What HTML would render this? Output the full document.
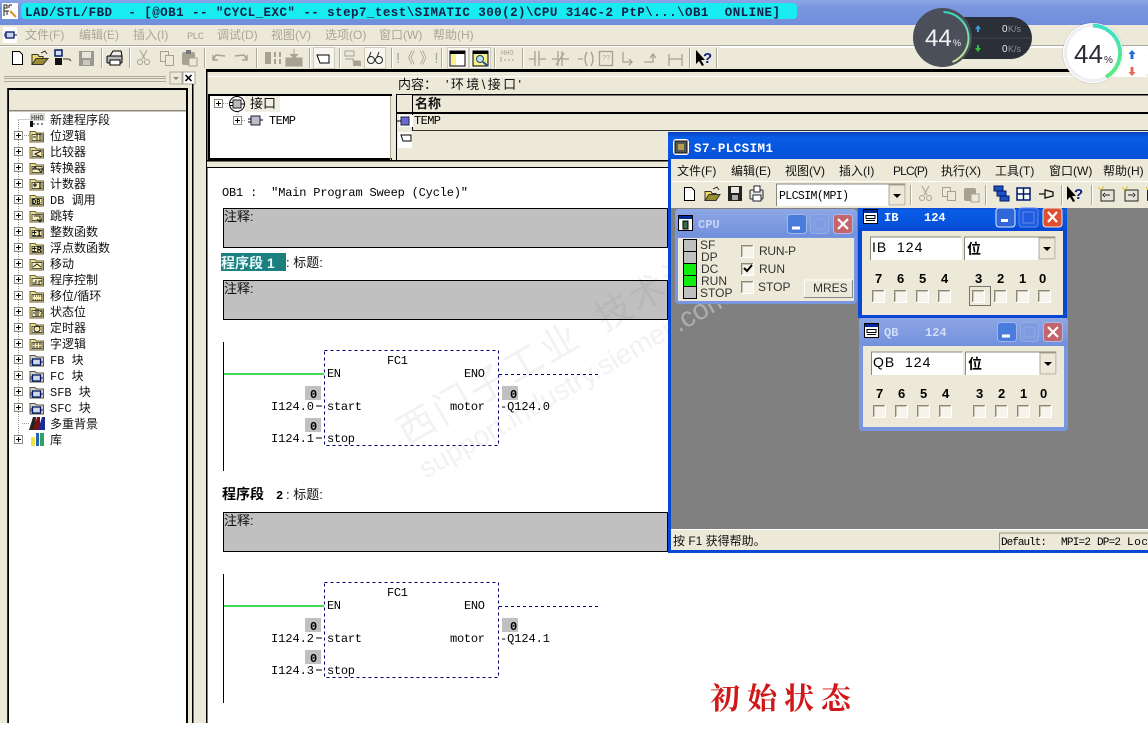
<!DOCTYPE html>
<html><head><meta charset="utf-8"><title>LAD/STL/FBD</title>
<style>
html,body{margin:0;padding:0;background:#fff}
svg{display:block}
text{white-space:pre;font-family:"Liberation Mono","Noto Sans CJK SC",monospace;font-size:12px;fill:#000}
.c{font-family:"Liberation Sans","Noto Sans CJK SC",sans-serif;font-size:12px;fill:#111}
.g{font-family:"Liberation Sans","Noto Sans CJK SC",sans-serif;font-size:12px;fill:#a9a696}
.s{font-family:"Liberation Sans",sans-serif;font-size:12px;fill:#333}
.d{font-family:"Liberation Sans",sans-serif;font-size:13px;font-weight:bold;fill:#000}
</style></head><body>
<svg width="1148" height="732" viewBox="0 0 1148 732" xmlns="http://www.w3.org/2000/svg">
<defs>
<linearGradient id="tb" x1="0" y1="0" x2="0" y2="1"><stop offset="0" stop-color="#8ba6e6"/><stop offset=".3" stop-color="#7a96df"/><stop offset="1" stop-color="#6f8ddb"/></linearGradient>
<linearGradient id="ta" x1="0" y1="0" x2="0" y2="1"><stop offset="0" stop-color="#0a3fc0"/><stop offset=".2" stop-color="#0a5ce6"/><stop offset="1" stop-color="#0450d8"/></linearGradient>
<linearGradient id="ti" x1="0" y1="0" x2="0" y2="1"><stop offset="0" stop-color="#8ea6e4"/><stop offset="1" stop-color="#7290dc"/></linearGradient>
<linearGradient id="arc1" x1="0" y1="0" x2="0" y2="1"><stop offset="0" stop-color="#37d6bd"/><stop offset="1" stop-color="#cfe88f"/></linearGradient>
<linearGradient id="arc2" x1="0" y1="0" x2="0" y2="1"><stop offset="0" stop-color="#3fe0c8"/><stop offset="1" stop-color="#5fe87f"/></linearGradient>
<g id="fold"><path d="M1 3.500h5l1.500 1.500h7v9h-13.500z" fill="#efe08a" stroke="#6b6338"/><rect x="3" y="6.500" width="10" height="6" fill="#f7eeb0" stroke="#555"/></g>
<g id="blk"><path d="M1 3.500h5l1.500 1.500h7v9h-13.500z" fill="#d6d6c8" stroke="#555"/><rect x="3.500" y="7" width="8" height="6" fill="#cfd6ee" stroke="#001a66" stroke-width="1.300"/><path d="M1.500 9h2M1.500 11h2M11.500 10h2.500" stroke="#001a66"/></g>
<g id="plus"><rect x=".5" y=".5" width="8" height="8" fill="#fff" stroke="#8a8a80"/><path d="M2 4.500h5M4.500 2v5" stroke="#000"/></g>
<g id="cb"><rect x="0" y="0" width="12" height="12" fill="#f6f4ec"/><path d="M.5 12V.5H12" stroke="#8a8878" fill="none"/><path d="M1.500 11V1.500H11" stroke="#c8c5b5" fill="none"/><path d="M0 12.500h12.500V0" stroke="#fff" fill="none"/></g>
<g id="sep"><path d="M.5 0v20" stroke="#aca899"/><path d="M1.500 0v20" stroke="#fff"/></g>
<g id="ctl" fill="none"><rect x=".5" y=".5" width="19" height="19" rx="3" fill="#4a7cdc" stroke="#9cb8ee"/><rect x="5" y="12.500" width="8" height="3" fill="#fff"/></g>
<g id="mx" fill="none"><rect x=".5" y=".5" width="18" height="19" rx="3" fill="#7f9ce2" stroke="#93ace8"/><rect x="4" y="5" width="11" height="10" stroke="#8ea8e8"/></g>
<g id="cl" fill="none"><rect x=".5" y=".5" width="19" height="19" rx="3" fill="#c4656e" stroke="#b0b8e4"/><path d="M5 5l10 10M15 5l-10 10" stroke="#fff" stroke-width="2.200"/></g>
<g id="tw"><rect x=".5" y=".5" width="14" height="14" fill="#fff" stroke="#000"/><rect x="1" y="1" width="13" height="3" fill="#002a9a"/><path d="M3 6.500h9v3h-9zM3 11.500h9" fill="#fff" stroke="#000"/></g>
</defs>

<rect width="1148" height="732" fill="#fff"/>
<!-- app background -->
<rect x="0" y="0" width="1148" height="723" fill="#ece9d8"/>
<rect x="0" y="723" width="1148" height="9" fill="#fff"/>
<!-- title -->
<rect x="0" y="0" width="1148" height="25" fill="url(#tb)"/>
<rect x="21" y="3" width="776" height="16" rx="4" fill="#18ecf0"/>
<g transform="translate(2,3)"><rect width="16" height="16" fill="#fff"/><path d="M2 2h3v3h-3zM2 5v8M7 2h3M7 2v3M2 8h5M5 8v4" stroke="#222" fill="none"/><path d="M8 8l6 6" stroke="#d89020" stroke-width="2"/></g>
<text x="25" y="16" textLength="755" style="font-weight:bold;font-size:12.500px;fill:#10204a">LAD/STL/FBD  - [@OB1 -- "CYCL_EXC" -- step7_test\SIMATIC 300(2)\CPU 314C-2 PtP\...\OB1  ONLINE]</text>

<!-- menu -->
<rect x="0" y="45" width="1148" height="1" fill="#aca899"/>
<rect x="0" y="46" width="1148" height="1" fill="#fff"/>
<g transform="translate(3,27)"><rect width="14" height="16" fill="#fff"/><rect x="3" y="5" width="8" height="6" fill="#ccd0e8" stroke="#001a66" stroke-width="1.300"/><path d="M1 7h2M1 9h2M11 8h3" stroke="#001a66"/></g>
<text class="g" x="25" y="39">文件(F)</text><text class="g" x="79" y="39">编辑(E)</text><text class="g" x="133" y="39">插入(I)</text><text x="187" y="39" textLength="17" style="font-size:10.500px;fill:#a9a696">PLC</text><text class="g" x="217" y="39">调试(D)</text><text class="g" x="271" y="39">视图(V)</text><text class="g" x="325" y="39">选项(O)</text><text class="g" x="379" y="39">窗口(W)</text><text class="g" x="433" y="39">帮助(H)</text>

<!-- main toolbar -->
<path d="M12.500 51.500h7l3 3v10h-10z" fill="#fff" stroke="#000"/>
<path d="M32 64.500v-10h6l1 2h4v8z" fill="#f0d868" stroke="#333"/><path d="M32 64.500l4-6h12l-5 6z" fill="#9a8c30" stroke="#333"/><path d="M41 53l4-2 2 3" fill="none" stroke="#333"/>
<rect x="55" y="50" width="7" height="6" fill="#d8dcf0" stroke="#001a66" stroke-width="1.500"/><rect x="55" y="58" width="7" height="7" fill="#111"/><path d="M63 59h6l2 2" stroke="#333" fill="none"/>
<rect x="79" y="51" width="15" height="15" fill="#9a9a90"/><rect x="82" y="52" width="9" height="6" fill="#e4e4dc"/><rect x="83" y="60" width="7" height="5" fill="#c8c8c0"/>
<use href="#sep" x="101" y="48"/>
<path d="M110 56l3-5h8l1 5z" fill="#eee" stroke="#000"/><rect x="107" y="56" width="15" height="7" rx="1" fill="#bbb" stroke="#000"/><rect x="110" y="60" width="10" height="5" fill="#fff" stroke="#000"/>
<use href="#sep" x="129" y="48"/>
<g fill="none" stroke="#a5a294"><path d="M140 50l5 9M147 50l-5 9"/><circle cx="140" cy="62" r="2.500"/><circle cx="147" cy="62" r="2.500"/><rect x="160.500" y="51.500" width="8" height="10" fill="#ece9d8"/><rect x="165.500" y="55.500" width="8" height="10" fill="#ece9d8"/></g>
<rect x="182" y="52" width="13" height="13" rx="2" fill="#a5a294"/><rect x="186" y="50" width="5" height="4" fill="#777"/><rect x="189" y="58" width="8" height="8" fill="#ece9d8" stroke="#a5a294"/>
<use href="#sep" x="204" y="48"/>
<path d="M213 60l3-5 9 1M213 55l0 5 5 0M247 60l-3-5-9 1M247 55l0 5-5 0" fill="none" stroke="#a5a294" stroke-width="1.500"/>
<use href="#sep" x="256" y="48"/>
<path d="M265 52h6v12h-6zM274 52h2v5h-2zM279 52h2v5h-2zM274 59h2v5h-2zM279 59h2v5h-2z" fill="#a5a294"/>
<path d="M286 58h16v8h-16zM294 49v7M290 54l4 4 4-4" fill="#a5a294" stroke="#a5a294"/>
<use href="#sep" x="309" y="48"/>
<rect x="313.500" y="47.500" width="21" height="21" fill="#f6f5ee" stroke="#cfccbc"/>
<path d="M317 55h12v8h-9z" fill="#fff" stroke="#000"/>
<use href="#sep" x="339" y="48"/>
<rect x="345" y="51" width="9" height="5" fill="none" stroke="#a5a294"/><path d="M345 59h8v2h7" stroke="#a5a294" fill="none"/><rect x="353" y="61" width="8" height="5" fill="#a5a294"/>
<rect x="364.500" y="47.500" width="21" height="21" fill="#f6f5ee" stroke="#cfccbc"/>
<g fill="none" stroke="#222"><circle cx="371" cy="60" r="3.500"/><circle cx="379" cy="60" r="3.500"/><path d="M369 57l2-5M377 57l2-5"/></g>
<use href="#sep" x="391" y="48"/>
<text class="c" x="396" y="63" style="fill:#a9a696;font-size:15px">!《 》!</text>
<use href="#sep" x="441" y="48"/>
<rect x="447.500" y="47.500" width="21" height="21" fill="#f6f5ee" stroke="#cfccbc"/>
<rect x="450" y="51" width="15" height="15" fill="#fff" stroke="#000"/><rect x="450" y="51" width="15" height="3" fill="#000"/><rect x="451" y="54" width="5" height="11" fill="#f8f088"/>
<rect x="469.500" y="47.500" width="21" height="21" fill="#f6f5ee" stroke="#cfccbc"/>
<rect x="473" y="51" width="15" height="15" fill="#f8f088" stroke="#000"/><rect x="473" y="51" width="15" height="3" fill="#000"/><circle cx="480" cy="59" r="3.500" fill="#bde" stroke="#246"/><path d="M483 62l5 4" stroke="#1a4fa8" stroke-width="2"/>
<use href="#sep" x="494" y="48"/>
<text x="501" y="55" style="font-size:7px;fill:#a9a696">HHO</text><path d="M501 57v5M504 60h2M508 60h2M512 60h2" stroke="#a5a294" fill="none"/>
<use href="#sep" x="522" y="48"/>
<g fill="none" stroke="#a5a294" stroke-width="1.300"><path d="M529 59h6M535 51v15M539 51v15M539 59h7M552 59h6M558 51v15M562 51v15M562 59h7M556 65l8-12M578 59h5"/><path d="M587 52q-4 7 0 14M591 52q4 7 0 14"/><rect x="599.500" y="51.500" width="13" height="14"/><path d="M623 52v10h9M629 59l3 3-3 3M644 62h9v-7M650 58l3-4 3 4M669 54v12M669 59h13M682 54v12"/></g>
<text x="602" y="60" style="font-size:7px;fill:#a9a696">??</text>
<use href="#sep" x="689" y="48"/>
<path d="M696 50v14l3-3 3 5 2-1-3-5h4z" fill="#000"/><text x="703" y="63" style="font-weight:bold;font-size:15px;fill:#0a1f88;font-family:'Liberation Sans'">?</text>
<use href="#sep" x="716" y="48"/>
<rect x="206" y="69" width="942" height="3" fill="#000"/>
<rect x="720" y="47" width="428" height="1" fill="#fff"/>

<!-- left panel -->
<path d="M4 76.500h162M4 78.500h162M4 81.500h162" stroke="#aca899" fill="none"/>
<rect x="170" y="72" width="12" height="12" fill="#ece9d8" stroke="#aca899"/><path d="M173 77h6l-3 3z" fill="#888"/>
<rect x="183" y="72" width="12" height="12" fill="#fff" stroke="#aca899"/><path d="M185.500 75l6 6M191.500 75l-6 6" stroke="#000" stroke-width="1.500"/>
<rect x="7" y="88" width="181" height="635" fill="#000"/>
<rect x="9" y="90" width="177" height="633" fill="#fff"/>
<rect x="9" y="90" width="177" height="20" fill="#ece9d8"/>
<rect x="9" y="110" width="177" height="1.500" fill="#8a8878"/>
<rect x="188" y="88" width="4" height="635" fill="#ece9d8"/>
<rect x="192" y="84" width="1.500" height="639" fill="#000"/>
<rect x="206" y="72" width="1.500" height="651" fill="#000"/>
<rect x="7" y="88" width="1" height="635" fill="#333"/>

<path d="M18.500 120v320M18.500 119.500h12M22 135.500h8M22 423.500h8" stroke="#999" stroke-dasharray="1 1" fill="none"/>
<g transform="translate(30,113)"><rect x="0" y="0" width="15" height="8" fill="#d8d8d0"/><text x="1" y="7" style="font-size:7px;fill:#333">HHO</text><rect x="0" y="8" width="3" height="6" fill="#111"/><path d="M3 11h12" stroke="#111" stroke-dasharray="2 2"/></g>
<text class="c" x="50" y="124">新建程序段</text>
<use href="#plus" x="14" y="131"/><use href="#fold" x="29" y="128"/><path d="M33 137h3M37 133v7M40 133v7" stroke="#222" fill="none"/><text class="c" x="50" y="140">位逻辑</text>
<use href="#plus" x="14" y="147"/><use href="#fold" x="29" y="144"/><path d="M41 151l-6 3 6 3" stroke="#222" fill="none"/><text class="c" x="50" y="156">比较器</text>
<use href="#plus" x="14" y="163"/><use href="#fold" x="29" y="160"/><path d="M33 169l2-2 2 2zM38 169h5l-2 3z" stroke="#222" fill="none"/><text class="c" x="50" y="172">转换器</text>
<use href="#plus" x="14" y="179"/><use href="#fold" x="29" y="176"/><path d="M33 185h4M35 183v4M40 182v7" stroke="#222" fill="none" stroke-width="1.300"/><text class="c" x="50" y="188">计数器</text>
<use href="#plus" x="14" y="195"/><use href="#fold" x="29" y="192"/><text x="32" y="204" style="font-size:7px;font-weight:bold">DB</text><text x="50" y="204" class="c" style="font-family:'Liberation Mono','Noto Sans CJK SC'">DB 调用</text>
<use href="#plus" x="14" y="211"/><use href="#fold" x="29" y="208"/><path d="M34 216h6v5M37 219l3 3 2-3" stroke="#222" fill="none"/><text class="c" x="50" y="220">跳转</text>
<use href="#plus" x="14" y="227"/><use href="#fold" x="29" y="224"/><text x="32" y="236" style="font-size:8px;font-weight:bold">±I</text><text class="c" x="50" y="236">整数函数</text>
<use href="#plus" x="14" y="243"/><use href="#fold" x="29" y="240"/><text x="32" y="252" style="font-size:8px;font-weight:bold">±R</text><text class="c" x="50" y="252">浮点数函数</text>
<use href="#plus" x="14" y="259"/><use href="#fold" x="29" y="256"/><path d="M33 267l4-3 4 3" stroke="#222" fill="none"/><text class="c" x="50" y="268">移动</text>
<use href="#plus" x="14" y="275"/><use href="#fold" x="29" y="272"/><path d="M33 283h3v-3M39 285v-4h3" stroke="#222" fill="none"/><text class="c" x="50" y="284">程序控制</text>
<use href="#plus" x="14" y="291"/><use href="#fold" x="29" y="288"/><path d="M33 296h9M33 300h9" stroke="#222" stroke-dasharray="1 1" fill="none"/><text class="c" x="50" y="300">移位/循环</text>
<use href="#plus" x="14" y="307"/><use href="#fold" x="29" y="304"/><path d="M33 313h2M36 309v7M38 309v7" stroke="#222" fill="none"/><text x="39" y="316" style="font-size:7px">?</text><text class="c" x="50" y="316">状态位</text>
<use href="#plus" x="14" y="323"/><use href="#fold" x="29" y="320"/><circle cx="37" cy="329" r="3" fill="none" stroke="#222"/><text class="c" x="50" y="332">定时器</text>
<use href="#plus" x="14" y="339"/><use href="#fold" x="29" y="336"/><path d="M33 344h9M33 347h9" stroke="#222" stroke-dasharray="2 1" fill="none"/><text class="c" x="50" y="348">字逻辑</text>
<use href="#plus" x="14" y="355"/><use href="#blk" x="29" y="352"/><text x="50" y="364" class="c" style="font-family:'Liberation Mono','Noto Sans CJK SC'">FB 块</text>
<use href="#plus" x="14" y="371"/><use href="#blk" x="29" y="368"/><text x="50" y="380" class="c" style="font-family:'Liberation Mono','Noto Sans CJK SC'">FC 块</text>
<use href="#plus" x="14" y="387"/><use href="#blk" x="29" y="384"/><text x="50" y="396" class="c" style="font-family:'Liberation Mono','Noto Sans CJK SC'">SFB 块</text>
<use href="#plus" x="14" y="403"/><use href="#blk" x="29" y="400"/><text x="50" y="412" class="c" style="font-family:'Liberation Mono','Noto Sans CJK SC'">SFC 块</text>
<path d="M29 430l4-13h3l-1 13z" fill="#222"/><path d="M33 430l4-13h3v13z" fill="#7a1010"/><path d="M38 430l4-13h3v13z" fill="#1a2a90"/><text class="c" x="50" y="428">多重背景</text>
<use href="#plus" x="14" y="435"/><path d="M31 437h4v9h-4z" fill="#e8e840"/><path d="M36 433h3v13h-3z" fill="#2860c0"/><path d="M40 433h4v13h-4z" fill="#30a060"/><text class="c" x="50" y="444">库</text>

<!-- interface pane -->
<rect x="207.500" y="72" width="940.500" height="88" fill="#ece9d8"/>
<rect x="208" y="76" width="940" height="1" fill="#fff"/>
<rect x="208" y="94" width="184" height="2" fill="#000"/>
<rect x="210" y="96" width="180" height="63" fill="#fff"/>
<rect x="208" y="96" width="2" height="64" fill="#000"/>
<rect x="208" y="158" width="184" height="2" fill="#000"/>
<rect x="390" y="96" width="1" height="64" fill="#aca899"/>
<rect x="396" y="94" width="1.500" height="66" fill="#000"/>
<rect x="397" y="94" width="751" height="1.500" fill="#000"/>
<rect x="397" y="95" width="15" height="65" fill="#ece9d8"/>
<rect x="396" y="112" width="752" height="2" fill="#000"/>
<rect x="412" y="95" width="1" height="35" fill="#000"/>
<rect x="413" y="114" width="735" height="16" fill="#ece9d8"/>
<rect x="412" y="130" width="736" height="1" fill="#333"/>
<rect x="207" y="160" width="941" height="1.500" fill="#000"/>
<text class="c" x="398" y="89" style="font-size:13px">内容：</text><text class="c" x="446" y="89" textLength="75" style="font-size:13px">'环境\接口'</text>
<text class="c" x="415" y="108" style="font-weight:bold;font-size:13px">名称</text>
<text x="414" y="124" textLength="27">TEMP</text>
<rect x="399" y="115" width="14" height="12" fill="#fff"/><rect x="401" y="117" width="8" height="8" fill="#6a6ad0" stroke="#223"/><path d="M397 121h4" stroke="#000"/>
<rect x="398" y="132" width="14" height="16" fill="#fff"/><path d="M401 135h10v6h-8z" fill="#fff" stroke="#000"/>
<!-- tree in pane -->
<use href="#plus" x="214" y="99"/>
<path d="M223 103.500h7M238 110v10M238 120.500h7" stroke="#999" stroke-dasharray="1 1" fill="none"/>
<rect x="245" y="96" width="35" height="16" fill="#f0eee2"/>
<circle cx="237" cy="104" r="7.500" fill="#fff" stroke="#000"/><rect x="233" y="100" width="8" height="8" fill="#bbb" stroke="#222"/><path d="M230 102.500h3M230 105.500h3M241 104h3" stroke="#000"/>
<text class="c" x="250" y="108" style="font-size:13px">接口</text>
<use href="#plus" x="233" y="116"/>
<rect x="251" y="116" width="9" height="9" fill="#bbc" stroke="#223"/><path d="M248 119h3M248 122h3M260 120h3" stroke="#000"/>
<text x="269" y="124" textLength="27">TEMP</text>

<!-- editor -->
<rect x="207" y="161.500" width="941" height="6" fill="#ece9d8"/>
<rect x="207.500" y="167" width="940.500" height="556" fill="#fff"/>
<rect x="207" y="167" width="941" height="1" fill="#000"/>

<text x="222" y="196" textLength="246">OB1 :  "Main Program Sweep (Cycle)"</text>
<rect x="223.500" y="208.500" width="444" height="39" fill="#c0c0c0" stroke="#000"/>
<text class="c" x="224" y="221" style="font-size:13px">注释:</text>
<rect x="221" y="253" width="65" height="18" fill="#1c8080"/>
<text class="c" x="221" y="268" style="fill:#e8fafa;font-weight:bold;font-size:14px">程序段 1</text>
<text class="c" x="286" y="267" style="font-size:13px">: 标题:</text>
<rect x="223.500" y="280.500" width="444" height="39" fill="#c0c0c0" stroke="#000"/>
<text class="c" x="224" y="293" style="font-size:13px">注释:</text>

<!-- network 1 -->
<path d="M223.500 342v129" stroke="#000"/>
<rect x="224" y="373" width="100" height="2" fill="#44d85a"/>
<rect x="324.500" y="350.500" width="174" height="95" fill="none" stroke="#000070" stroke-dasharray="3 3"/>
<path d="M499 374.500h100" stroke="#000070" stroke-dasharray="3 3"/>
<text x="387" y="364" textLength="21">FC1</text>
<text x="327" y="377" textLength="14">EN</text>
<text x="464" y="377" textLength="21">ENO</text>
<rect x="305" y="386" width="16" height="14" fill="#c0c0c0"/><text x="310" y="398" style="font-weight:bold">0</text>
<rect x="502" y="386" width="16" height="14" fill="#c0c0c0"/><text x="510" y="398" style="font-weight:bold">0</text>
<text x="271" y="410" textLength="43">I124.0</text><path d="M316 406h6" stroke="#000"/>
<text x="327" y="410" textLength="35">start</text>
<text x="450" y="410" textLength="35">motor</text>
<text x="500" y="410" textLength="50">-Q124.0</text>
<rect x="305" y="418" width="16" height="14" fill="#c0c0c0"/><text x="310" y="430" style="font-weight:bold">0</text>
<text x="271" y="442" textLength="43">I124.1</text><path d="M316 438h6" stroke="#000"/>
<text x="327" y="442" textLength="28">stop</text>

<text class="c" x="222" y="499" style="font-weight:bold;font-size:14px;fill:#000">程序段</text><text x="276" y="499" style="font-weight:bold">2</text><text class="c" x="286" y="499" style="font-size:13px">: 标题:</text>
<rect x="223.500" y="512.500" width="444" height="39" fill="#c0c0c0" stroke="#000"/>
<text class="c" x="224" y="525" style="font-size:13px">注释:</text>

<!-- network 2 -->
<path d="M223.500 574v129" stroke="#000"/>
<rect x="224" y="605" width="100" height="2" fill="#44d85a"/>
<rect x="324.500" y="582.500" width="174" height="95" fill="none" stroke="#000070" stroke-dasharray="3 3"/>
<path d="M499 606.500h100" stroke="#000070" stroke-dasharray="3 3"/>
<text x="387" y="596" textLength="21">FC1</text>
<text x="327" y="609" textLength="14">EN</text>
<text x="464" y="609" textLength="21">ENO</text>
<rect x="305" y="618" width="16" height="14" fill="#c0c0c0"/><text x="310" y="630" style="font-weight:bold">0</text>
<rect x="502" y="618" width="16" height="14" fill="#c0c0c0"/><text x="510" y="630" style="font-weight:bold">0</text>
<text x="271" y="642" textLength="43">I124.2</text><path d="M316 638h6" stroke="#000"/>
<text x="327" y="642" textLength="35">start</text>
<text x="450" y="642" textLength="35">motor</text>
<text x="500" y="642" textLength="50">-Q124.1</text>
<rect x="305" y="650" width="16" height="14" fill="#c0c0c0"/><text x="310" y="662" style="font-weight:bold">0</text>
<text x="271" y="674" textLength="43">I124.3</text><path d="M316 670h6" stroke="#000"/>
<text x="327" y="674" textLength="28">stop</text>

<!-- watermark on editor -->
<g opacity=".06" transform="rotate(-30 400 450)">
<text x="408" y="450" style="font-family:'Noto Sans CJK SC';font-size:38px;fill:#333;letter-spacing:3px">西门子工业</text>
<text x="636" y="450" style="font-family:'Noto Sans CJK SC';font-size:36px;fill:#333;letter-spacing:3px">技术论坛</text>
<text x="408" y="488" style="font-family:'Liberation Sans';font-size:28px;fill:#333">support.industry.siemens.com</text>
</g>

<text x="710" y="709" style="font-family:'Noto Serif CJK SC',serif;font-size:30px;fill:#d01818;letter-spacing:7px;font-weight:700">初始状态</text>

<!-- PLCSIM window -->
<rect x="668" y="132" width="480" height="421" fill="#0648d4"/>
<rect x="668" y="132" width="480" height="27" fill="url(#ta)"/>
<rect x="671" y="159" width="477" height="391" fill="#ece9d8"/>
<rect x="671" y="206" width="477" height="323" fill="#808080"/>
<rect x="671" y="529" width="477" height="1" fill="#fff"/>
<g transform="translate(673,139)"><rect width="16" height="16" rx="3" fill="#fff"/><rect x="2" y="2" width="12" height="12" fill="#555" stroke="#111"/><rect x="5" y="5" width="6" height="6" fill="#b0a050"/></g>
<text x="694" y="152" textLength="79" style="font-weight:bold;font-size:12.500px;fill:#fff">S7-PLCSIM1</text>
<text class="c" x="677" y="175">文件(F)</text><text class="c" x="731" y="175">编辑(E)</text><text class="c" x="785" y="175">视图(V)</text><text class="c" x="839" y="175">插入(I)</text><text class="c" x="893" y="175" textLength="35">PLC(P)</text><text class="c" x="941" y="175">执行(X)</text><text class="c" x="995" y="175">工具(T)</text><text class="c" x="1049" y="175">窗口(W)</text><text class="c" x="1103" y="175">帮助(H)</text>
<rect x="671" y="181" width="477" height="1" fill="#fff"/>
<path d="M684.500 187.500h7l3 3v10h-10z" fill="#fff" stroke="#000"/>
<path d="M705 200.500v-9h6l1 2h4v7z" fill="#f0d868" stroke="#333"/><path d="M705 200.500l4-6h11l-4 6z" fill="#9a8c30" stroke="#333"/><path d="M713 189l4-2 2 3" fill="none" stroke="#333"/>
<rect x="728" y="186" width="14" height="15" fill="#222"/><rect x="731" y="187" width="8" height="6" fill="#e8e8e0"/><rect x="732" y="195" width="6" height="5" fill="#aaa"/>
<rect x="750" y="190" width="13" height="9" rx="1" fill="#e8e8e0" stroke="#223"/><rect x="754" y="186" width="6" height="6" fill="#fff" stroke="#223"/><rect x="753" y="195" width="8" height="6" fill="#fff" stroke="#223"/>
<rect x="776" y="184" width="130" height="22" fill="#fff"/>
<path d="M776.500 206v-22h129" stroke="#8a8878" fill="none"/>
<text x="779" y="199" textLength="70" style="font-size:11.500px">PLCSIM(MPI)</text>
<rect x="889" y="185" width="16" height="20" fill="#ece9d8" stroke="#aca899"/><path d="M893 194h8l-4 4z" fill="#000"/>
<use href="#sep" x="910" y="185"/>
<g fill="none" stroke="#a5a294"><path d="M922 186l5 9M929 186l-5 9"/><circle cx="922" cy="198" r="2.500"/><circle cx="929" cy="198" r="2.500"/><rect x="942.500" y="187.500" width="8" height="9" fill="#ece9d8"/><rect x="947.500" y="191.500" width="8" height="9" fill="#ece9d8"/></g>
<rect x="964" y="188" width="12" height="13" rx="2" fill="#a5a294"/><rect x="971" y="194" width="8" height="8" fill="#ece9d8" stroke="#a5a294"/>
<use href="#sep" x="985" y="185"/>
<rect x="994" y="186" width="9" height="5" fill="#2050c0" stroke="#001a66"/><rect x="997" y="191" width="9" height="5" fill="#2050c0" stroke="#001a66"/><rect x="1000" y="196" width="9" height="5" fill="#2050c0" stroke="#001a66"/>
<rect x="1017" y="188" width="13" height="12" fill="#fff" stroke="#001a66" stroke-width="1.500"/><path d="M1017 194h13M1023.500 188v12" stroke="#001a66" stroke-width="1.500"/>
<path d="M1039 194h6M1045 190v8l8-2v-4z" fill="none" stroke="#111" stroke-width="1.300"/>
<use href="#sep" x="1061" y="185"/>
<path d="M1067 186v14l3-3 3 5 2-1-3-5h4z" fill="#000"/><text x="1074" y="199" style="font-weight:bold;font-size:15px;fill:#0a1f88;font-family:'Liberation Sans'">?</text>
<use href="#sep" x="1091" y="185"/>
<rect x="1101" y="190" width="13" height="11" fill="#e4e4da" stroke="#222"/><path d="M1098 187l3 3M1104 186l-2 3" stroke="#d8c820"/><path d="M1105 195h5M1105 193l-2 2 2 2" stroke="#222" fill="none"/>
<rect x="1125" y="190" width="13" height="11" fill="#e4e4da" stroke="#222"/><path d="M1122 187l3 3M1128 186l-2 3" stroke="#d8c820"/><path d="M1128 195h5M1133 193l2 2-2 2" stroke="#222" fill="none"/>
<path d="M1146 187l2 3" stroke="#d8c820"/>
<rect x="1147" y="190" width="1" height="11" fill="#222"/>
<!-- status bar -->
<text class="c" x="673" y="545">按 F1 获得帮助。</text>
<rect x="999" y="533" width="149" height="17" fill="#ece9d8"/><path d="M999.500 550v-17h149" stroke="#9a9888" fill="none"/>
<text x="1001" y="545" textLength="46" style="font-size:11px">Default:</text><text x="1061" y="545" textLength="30" style="font-size:11px">MPI=2</text><text x="1097" y="545" textLength="24" style="font-size:11px">DP=2</text><text x="1127" y="545" textLength="21" style="font-size:11px">Loc</text>
<rect x="668" y="550" width="480" height="3" fill="#0648d4"/>

<!-- watermark on MDI -->
<g opacity=".35" transform="rotate(-30 400 450)">
<text x="700" y="488" style="font-family:'Liberation Sans';font-size:28px;fill:#fff">.com</text>
</g>

<!-- CPU window -->
<rect x="675" y="209" width="182" height="95" rx="4" fill="#7a96df"/>
<rect x="675" y="209" width="182" height="28" rx="4" fill="url(#ti)"/>
<rect x="678" y="238" width="176" height="63" fill="#ece9d8"/>
<g transform="translate(678,215)"><rect x=".5" y=".5" width="14" height="15" fill="#fff" stroke="#000"/><rect x="1" y="1" width="13" height="3" fill="#002a9a"/><rect x="5" y="6" width="5" height="8" fill="#3a6a50" stroke="#000"/></g>
<text x="698" y="228" style="font-weight:bold;fill:#c6d4f6">CPU</text>
<use href="#ctl" x="787" y="214"/><use href="#mx" x="810" y="214"/><use href="#cl" x="833" y="214"/>
<rect x="683" y="239" width="14" height="60" fill="#000"/>
<rect x="684" y="240" width="12" height="11" fill="#c0c0c0"/><rect x="684" y="252" width="12" height="11" fill="#c0c0c0"/><rect x="684" y="264" width="12" height="11" fill="#10ee10"/><rect x="684" y="276" width="12" height="10" fill="#10ee10"/><rect x="684" y="287" width="12" height="11" fill="#c0c0c0"/>
<text class="s" x="700" y="249">SF</text><text class="s" x="701" y="261">DP</text><text class="s" x="701" y="273">DC</text><text class="s" x="701" y="285">RUN</text><text class="s" x="700" y="297">STOP</text>
<use href="#cb" x="741" y="245"/><use href="#cb" x="741" y="263"/><path d="M744 268l3 3 5-6" stroke="#000" stroke-width="2" fill="none"/><use href="#cb" x="741" y="281"/>
<text class="s" x="759" y="255" textLength="37">RUN-P</text><text class="s" x="759" y="273">RUN</text><text class="s" x="758" y="291">STOP</text>
<rect x="804" y="280" width="49" height="18" fill="#ece9d8"/><path d="M804.500 297v-17h48" stroke="#fff" fill="none"/><path d="M804 297.500h49M852.500 280v18" stroke="#888" fill="none"/>
<text class="s" x="813" y="292">MRES</text>

<!-- IB window -->
<rect x="858" y="206" width="209" height="112" fill="#0648d4"/>
<rect x="858" y="206" width="209" height="22" fill="url(#ta)"/>
<rect x="862" y="231" width="201" height="84" fill="#ece9d8"/>
<rect x="671" y="206" width="477" height="2" fill="#ece9d8"/>
<use href="#tw" x="863" y="209"/>
<text x="884" y="221" style="font-weight:bold;fill:#fff">IB</text><text x="924" y="221" style="font-weight:bold;fill:#fff">124</text>
<rect x="996" y="208" width="19" height="19" rx="3" fill="#2f66d8" stroke="#e0e8f8"/><rect x="1001" y="219" width="7" height="3" fill="#fff"/><rect x="1019" y="208" width="19" height="19" rx="3" fill="#1f5ce0" stroke="#5f8aea"/><rect x="1023" y="212" width="11" height="11" fill="none" stroke="#5f8aea"/><rect x="1043" y="208" width="19" height="19" rx="3" fill="#e05030" stroke="#f0e8e0"/><path d="M1048 212l9 10M1057 212l-9 10" stroke="#fff" stroke-width="2.200"/>
<rect x="870" y="237" width="92" height="23" fill="#fff"/><path d="M870.500 260v-23h91" stroke="#8a8878" fill="none"/>
<rect x="964" y="237" width="92" height="23" fill="#fff"/><path d="M964.500 260v-23h91" stroke="#8a8878" fill="none"/>
<rect x="1039" y="238" width="16" height="21" fill="#ece9d8" stroke="#aca899"/><path d="M1043 247h8l-4 4z" fill="#000"/>
<text class="d" x="872" y="252" style="font-weight:500;font-size:14px;letter-spacing:1px">IB  124</text>
<text class="c" x="967" y="254" style="font-weight:bold;font-size:14px;fill:#000">位</text>
<text class="d" x="875" y="283">7</text><text class="d" x="897" y="283">6</text><text class="d" x="919" y="283">5</text><text class="d" x="941" y="283">4</text><text class="d" x="975" y="283">3</text><text class="d" x="997" y="283">2</text><text class="d" x="1019" y="283">1</text><text class="d" x="1039" y="283">0</text>
<use href="#cb" x="872" y="290"/><use href="#cb" x="894" y="290"/><use href="#cb" x="916" y="290"/><use href="#cb" x="938" y="290"/><use href="#cb" x="972" y="290"/><use href="#cb" x="994" y="290"/><use href="#cb" x="1016" y="290"/><use href="#cb" x="1038" y="290"/>
<rect x="969.500" y="286.500" width="21" height="19" fill="none" stroke="#000" stroke-dasharray="1 1"/>

<!-- QB window -->
<rect x="859" y="318" width="209" height="113" rx="3" fill="#7a96df"/>
<rect x="859" y="318" width="209" height="28" rx="3" fill="url(#ti)"/>
<rect x="863" y="346" width="201" height="81" fill="#ece9d8"/>
<use href="#tw" x="864" y="323"/>
<text x="884" y="336" style="font-weight:bold;fill:#d0dcf8">QB</text><text x="925" y="336" style="font-weight:bold;fill:#d0dcf8">124</text>
<use href="#ctl" x="997" y="322"/><use href="#mx" x="1020" y="322"/><use href="#cl" x="1043" y="322"/>
<rect x="871" y="352" width="92" height="23" fill="#fff"/><path d="M871.500 375v-23h91" stroke="#8a8878" fill="none"/>
<rect x="965" y="352" width="92" height="23" fill="#fff"/><path d="M965.500 375v-23h91" stroke="#8a8878" fill="none"/>
<rect x="1040" y="353" width="16" height="21" fill="#ece9d8" stroke="#aca899"/><path d="M1044 362h8l-4 4z" fill="#000"/>
<text class="d" x="873" y="367" style="font-weight:500;font-size:14px;letter-spacing:1px">QB  124</text>
<text class="c" x="968" y="369" style="font-weight:bold;font-size:14px;fill:#000">位</text>
<text class="d" x="876" y="398">7</text><text class="d" x="898" y="398">6</text><text class="d" x="920" y="398">5</text><text class="d" x="942" y="398">4</text><text class="d" x="976" y="398">3</text><text class="d" x="998" y="398">2</text><text class="d" x="1020" y="398">1</text><text class="d" x="1040" y="398">0</text>
<use href="#cb" x="873" y="405"/><use href="#cb" x="895" y="405"/><use href="#cb" x="917" y="405"/><use href="#cb" x="939" y="405"/><use href="#cb" x="973" y="405"/><use href="#cb" x="995" y="405"/><use href="#cb" x="1017" y="405"/><use href="#cb" x="1039" y="405"/>

<!-- overlay widgets -->
<rect x="942" y="17" width="90" height="42" rx="21" fill="#2b2f38"/>
<path d="M966 38h66" stroke="#3c404a"/>
<circle cx="942.500" cy="37.500" r="29.500" fill="#4b4f5a"/>
<path d="M943.500 12a26 26 0 0 1 9 50" fill="none" stroke="url(#arc1)" stroke-width="2"/>
<text x="925" y="46" style="font-family:'Liberation Sans';font-size:24px;fill:#f2f2f4">44</text><text x="953" y="46" style="font-family:'Liberation Sans';font-size:9px;fill:#f2f2f4">%</text>
<path d="M978 25l3 4h-2v3h-2v-3h-2z" fill="#3f9ce0"/><path d="M978 52l3-4h-2v-3h-2v3h-2z" fill="#30c040"/>
<text x="1002" y="32" style="font-family:'Liberation Sans';font-size:10px;fill:#e8e8e8">0</text><text x="1008" y="32" style="font-family:'Liberation Sans';font-size:9px;fill:#8f939c">K/s</text>
<text x="1002" y="52" style="font-family:'Liberation Sans';font-size:10px;fill:#e8e8e8">0</text><text x="1008" y="52" style="font-family:'Liberation Sans';font-size:9px;fill:#8f939c">K/s</text>
<rect x="1100" y="46" width="48" height="30" rx="4" fill="#fff"/>
<circle cx="1093" cy="53" r="31" fill="#000" opacity=".08"/>
<circle cx="1093" cy="53" r="30" fill="#fff"/>
<circle cx="1093" cy="53" r="27.500" fill="none" stroke="#eeeef4" stroke-width="3"/>
<path d="M1093 25.500a27.500 27.500 0 0 1 13 51.500" fill="none" stroke="url(#arc2)" stroke-width="4"/>
<text x="1074" y="63" style="font-family:'Liberation Sans';font-size:26px;fill:#2c2c38">44</text><text x="1104" y="63" style="font-family:'Liberation Sans';font-size:10px;fill:#2c2c38">%</text>
<path d="M1132 50l3.500 4h-2v5h-3v-5h-2z" fill="#1f6fd8"/><path d="M1132 76l3.500-4h-2v-5h-3v5h-2z" fill="#e86a50"/>
</svg>
</body></html>
